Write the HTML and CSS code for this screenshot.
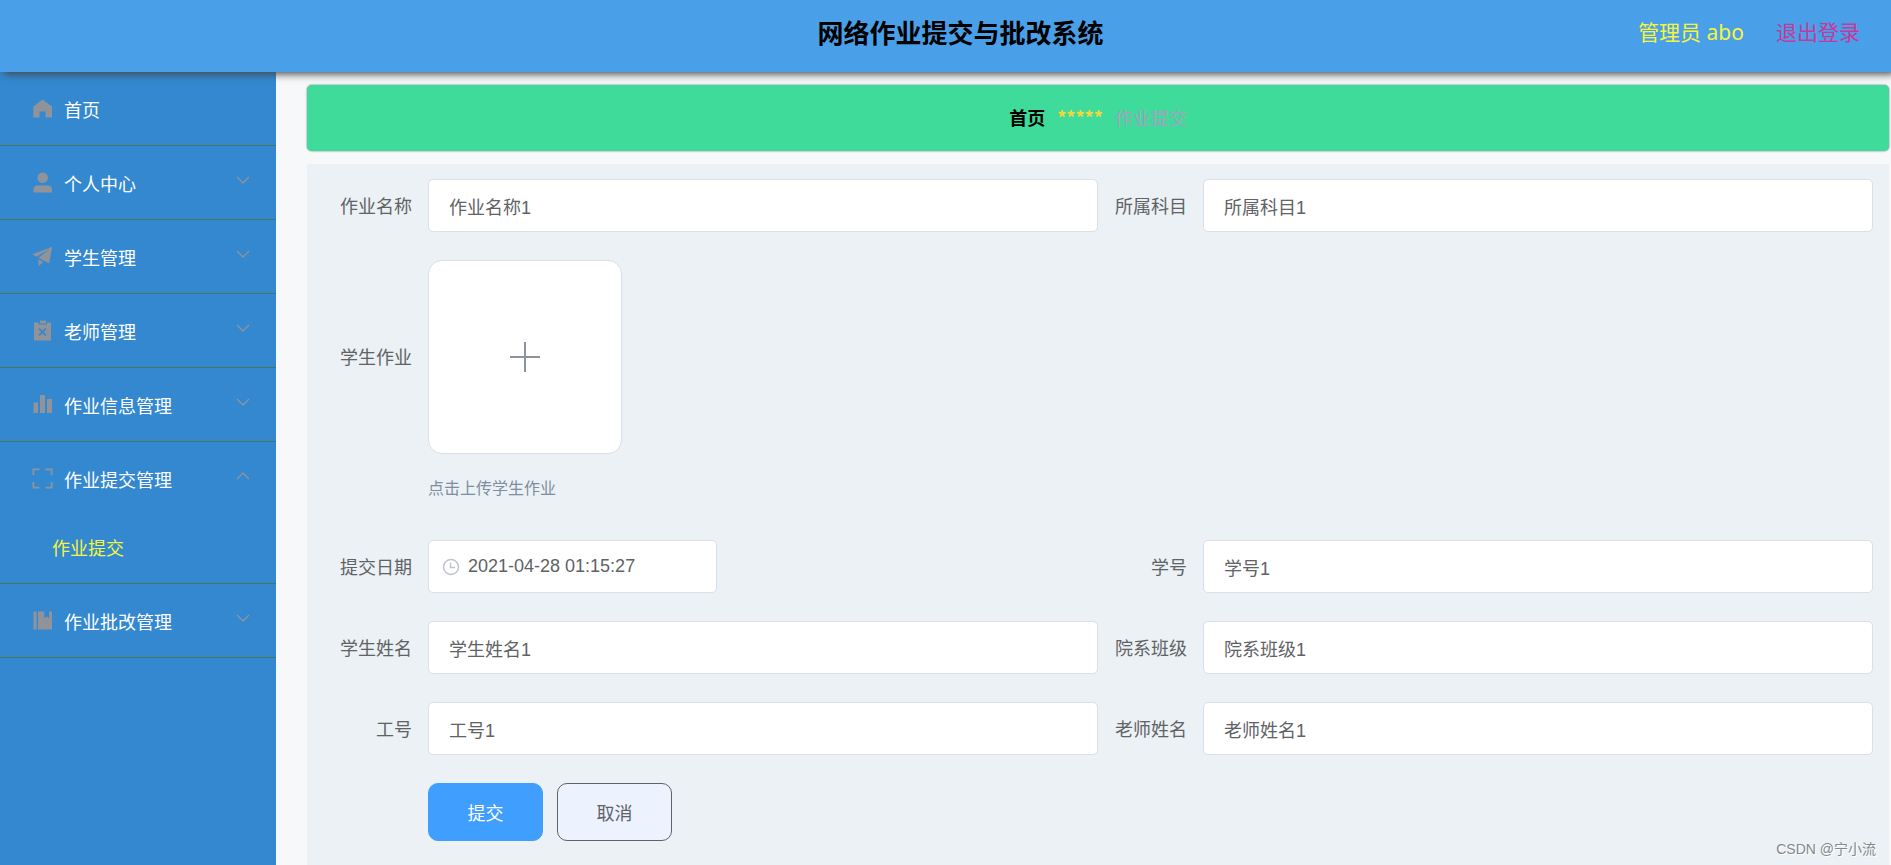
FILE: index.html
```html
<!DOCTYPE html>
<html lang="zh-CN">
<head>
<meta charset="utf-8">
<title>网络作业提交与批改系统</title>
<link rel="stylesheet" href="styles.css">
</head>
<body>
<header class="header">
  <h1 class="header-title">网络作业提交与批改系统</h1>
  <div class="header-user">
    <span class="user-name">管理员 abo</span>
    <a class="logout" href="#">退出登录</a>
  </div>
</header>

<div class="layout">
  <nav class="sidebar">
    <ul class="menu">
      <li class="menu-item">
        <a class="menu-link" href="#">
          <svg class="menu-icon" viewBox="0 0 21 21"><path d="M10.500 1.500 20 8.500V19.500H13.500V13.500H7.500V19.500H1.300V8.500z"/></svg>
          <span class="menu-text">首页</span>
        </a>
      </li>
      <li class="menu-item">
        <a class="menu-link" href="#">
          <svg class="menu-icon" viewBox="0 0 21 21"><circle cx="10.700" cy="5.800" r="5.300"/><path d="M1.500 20.500V17.500a4 4 0 0 1 4-4h10.500a4 4 0 0 1 4 4v3z"/></svg>
          <span class="menu-text">个人中心</span>
          <svg class="menu-arrow" viewBox="0 0 14 14"><path d="M1 4l6 6 6-6"/></svg>
        </a>
      </li>
      <li class="menu-item">
        <a class="menu-link" href="#">
          <svg class="menu-icon" viewBox="60 100 860 880"><path d="m64 448 832-320-128 704-446.080-243.328L832 192 242.816 545.472zm256 512V657.024L512 768z"/></svg>
          <span class="menu-text">学生管理</span>
          <svg class="menu-arrow" viewBox="0 0 14 14"><path d="M1 4l6 6 6-6"/></svg>
        </a>
      </li>
      <li class="menu-item">
        <a class="menu-link" href="#">
          <svg class="menu-icon" viewBox="0 0 21 21"><path fill-rule="evenodd" d="M2 2.500H6.500V4.500H15V2.500H19V20.500H2zM6.500 9.200 9.300 12 6.500 14.800 7.700 16 10.500 13.200 13.300 16 14.500 14.800 11.700 12 14.500 9.200 13.300 8 10.500 10.800 7.700 8z"/><path d="M8 .5h6v3H8z"/></svg>
          <span class="menu-text">老师管理</span>
          <svg class="menu-arrow" viewBox="0 0 14 14"><path d="M1 4l6 6 6-6"/></svg>
        </a>
      </li>
      <li class="menu-item">
        <a class="menu-link" href="#">
          <svg class="menu-icon" viewBox="0 0 21 21"><path d="M1.500 8.500H6V19H1.500zM8 1h5v18H8zM15 5h5v14H15z"/></svg>
          <span class="menu-text">作业信息管理</span>
          <svg class="menu-arrow" viewBox="0 0 14 14"><path d="M1 4l6 6 6-6"/></svg>
        </a>
      </li>
      <li class="menu-item">
        <a class="menu-link" href="#">
          <svg class="menu-icon" viewBox="0 0 21 21"><path d="M.5.500H7.500V2.300H2.300V7H.5zM13.500.500H20.500V7H18.700V2.300H13.500zM.5 14H2.300V18.700H7.500V20.500H.5zM18.700 14H20.500V20.500H13.500V18.700H18.700z"/></svg>
          <span class="menu-text">作业提交管理</span>
          <svg class="menu-arrow" viewBox="0 0 14 14"><path d="M1 10l6-6 6 6"/></svg>
        </a>
        <a class="submenu-link" href="#">作业提交</a>
      </li>
      <li class="menu-item">
        <a class="menu-link" href="#">
          <svg class="menu-icon" viewBox="0 0 21 21"><path d="M1.500 1.500H4.700V19.500H1.500zM6 1.500H12.300V8.500L14.700 6.200 17 8.500V1.500H20V19.500H6z"/></svg>
          <span class="menu-text">作业批改管理</span>
          <svg class="menu-arrow" viewBox="0 0 14 14"><path d="M1 4l6 6 6-6"/></svg>
        </a>
      </li>
    </ul>
  </nav>

  <main class="main">
    <nav class="breadcrumb">
      <a class="crumb-home" href="#">首页</a>
      <span class="crumb-separator">*****</span>
      <span class="crumb-current">作业提交</span>
    </nav>

    <form class="form">
      <div class="field">
        <label class="label" for="title">作业名称</label>
        <input class="input" id="title" type="text" value="作业名称1">
      </div>
      <div class="field">
        <label class="label" for="subject">所属科目</label>
        <input class="input" id="subject" type="text" value="所属科目1">
      </div>
      <div class="field field-upload">
        <label class="label" for="upload">学生作业</label>
        <button class="upload" id="upload" type="button" aria-label="上传">
          <svg class="upload-icon" viewBox="0 0 32 32"><path d="M16 1v30M1 16h30"/></svg>
        </button>
        <p class="hint">点击上传学生作业</p>
      </div>
      <div class="field">
        <label class="label" for="date">提交日期</label>
        <div class="date">
          <svg class="date-icon" viewBox="0 0 18 18"><circle cx="9" cy="9" r="7.500"/><path d="M8.500 4.500V9.500H13"/></svg>
          <input class="date-input" id="date" type="text" value="2021-04-28 01:15:27">
        </div>
      </div>
      <div class="field">
        <label class="label" for="number">学号</label>
        <input class="input" id="number" type="text" value="学号1">
      </div>
      <div class="field">
        <label class="label" for="student">学生姓名</label>
        <input class="input" id="student" type="text" value="学生姓名1">
      </div>
      <div class="field">
        <label class="label" for="class">院系班级</label>
        <input class="input" id="class" type="text" value="院系班级1">
      </div>
      <div class="field">
        <label class="label" for="job">工号</label>
        <input class="input" id="job" type="text" value="工号1">
      </div>
      <div class="field">
        <label class="label" for="teacher">老师姓名</label>
        <input class="input" id="teacher" type="text" value="老师姓名1">
      </div>
      <div class="actions">
        <button class="button button-primary" type="submit">提交</button>
        <button class="button" type="button">取消</button>
      </div>
    </form>
  </main>
</div>
<div class="watermark">CSDN @宁小流</div>
</body>
</html>
```
FILE: styles.css
```css
* {
  box-sizing: border-box;
}

body {
  display: flex;
  flex-direction: column;
  min-height: 100vh;
  margin: 0;
  background: #f6f8fa;
  color: #606266;
  font-family: "Liberation Sans", "Noto Sans CJK SC", sans-serif;
  font-size: 18px;
}

a {
  text-decoration: none;
}

.header {
  z-index: 1;
  display: grid;
  grid-template-columns: 1fr auto 1fr;
  align-items: center;
  height: 72px;
  padding: 0 31px 10px 61px;
  background: #4a9fe9;
  box-shadow: 4px 2px 8px #444;
}

.header-title {
  grid-column: 2;
  margin: 0;
  color: #000;
  font-size: 26px;
  font-weight: 700;
}

.header-user {
  display: flex;
  justify-content: flex-end;
  gap: 32px;
  font-family: "Noto Sans", "Noto Sans CJK SC", sans-serif;
  font-size: 21px;
}

.user-name {
  color: #f5f53c;
}

.logout {
  color: #c5389c;
}

.layout {
  display: flex;
  flex: 1;
}

.sidebar {
  flex: none;
  width: 276px;
  background: #3388cf;
}

.menu {
  margin: 0;
  padding: 0;
  list-style: none;
}

.menu-item {
  border-bottom: 1px solid #44785e;
}

.menu-link {
  display: flex;
  align-items: center;
  gap: 11px;
  height: 73px;
  padding: 0 26px 0 32px;
  color: #fff;
}

.menu-icon {
  width: 21px;
  height: 21px;
  fill: #909399;
}

.menu-text {
  flex: 1;
}

.menu-arrow {
  width: 14px;
  height: 14px;
  margin-bottom: 6px;
  fill: none;
  stroke: #909399;
  stroke-width: 1.3;
}

.submenu-link {
  display: block;
  height: 68px;
  padding-left: 52px;
  color: #f5f53c;
  line-height: 68px;
}

.main {
  flex: 1;
  display: flex;
  flex-direction: column;
  gap: 13px;
  padding: 13px 2px 0 31px;
}

.breadcrumb {
  display: flex;
  align-items: center;
  justify-content: center;
  gap: 12px;
  height: 66px;
  padding-bottom: 2px;
  border-radius: 5px;
  background: #3fdb9a;
  box-shadow: 0 0 2px rgba(0, 0, 0, 0.6);
  font-family: "Noto Sans CJK SC", sans-serif;
}

.crumb-home {
  color: #000;
  font-weight: 700;
}

.crumb-separator {
  color: #f0d83c;
  font-weight: 700;
}

.crumb-current {
  color: #9fa3bd;
}

.form {
  flex: 1;
  display: grid;
  grid-template-columns: 1fr 1fr;
  align-content: start;
  row-gap: 28px;
  padding: 15px 16px 20px;
  background: #ebf1f4;
}

.field {
  display: grid;
  grid-template-columns: 105px 1fr;
  align-items: center;
}

.label {
  padding: 0 16px 2px 0;
  text-align: right;
}

.input {
  width: 100%;
  height: 53px;
  padding: 0 20px;
  border: 1px solid #dcdfe6;
  border-radius: 5px;
  background: #fff;
  color: #606266;
  font: inherit;
}

.field-upload {
  grid-column: 1 / -1;
}

.upload {
  display: grid;
  place-items: center;
  width: 194px;
  height: 194px;
  padding: 0;
  border: 1px solid #dcdfe6;
  border-radius: 14px;
  background: #fff;
}

.upload-icon {
  width: 32px;
  height: 32px;
  fill: none;
  stroke: #8c939d;
  stroke-width: 2;
}

.hint {
  grid-column: 2;
  margin: 21px 0 9px;
  color: #7f8da1;
  font-size: 16px;
  line-height: 28px;
}

.date {
  display: flex;
  align-items: center;
  gap: 8px;
  width: 289px;
  height: 53px;
  padding: 0 13px;
  border: 1px solid #dcdfe6;
  border-radius: 5px;
  background: #fff;
}

.date-icon {
  flex: none;
  width: 18px;
  height: 18px;
  fill: none;
  stroke: #c0c4cc;
  stroke-width: 1.5;
}

.date-input {
  flex: 1;
  min-width: 0;
  padding: 0;
  border: 0;
  background: none;
  color: #606266;
  font: inherit;
}

.actions {
  grid-column: 1 / -1;
  display: flex;
  gap: 14px;
  padding-left: 105px;
}

.button {
  width: 115px;
  height: 58px;
  border: 1px solid #606266;
  border-radius: 10px;
  background: #ecf3ff;
  color: #606266;
  font: inherit;
}

.button-primary {
  border-color: #409eff;
  background: #409eff;
  color: #fff;
}

.watermark {
  position: absolute;
  right: 15px;
  bottom: 7px;
  color: #85888c;
  font-size: 14px;
  text-shadow: 1px 1px 0 #fff;
}
```
